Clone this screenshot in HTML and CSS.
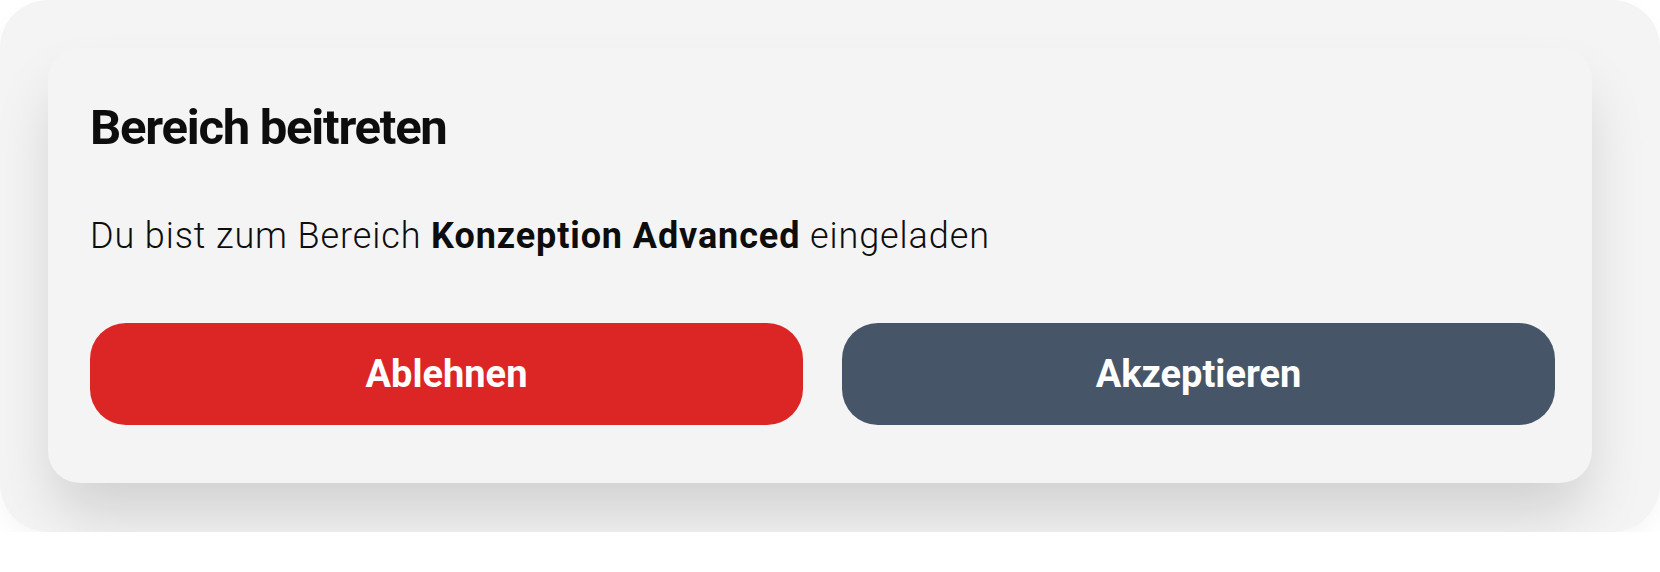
FILE: index.html
```html
<!DOCTYPE html>
<html>
<head>
    <title>Bereich beitreten</title>
    <meta charset="UTF-8">
    <meta name="viewport" content="width=device-width, initial-scale=1.0">
    <link rel="stylesheet" href="styles.css">
</head>
<body>
    <div class="backdrop">
        <section class="invite-card">
            <h2 class="invite-title">Bereich beitreten</h2>
            <p class="invite-text">Du bist zum Bereich <strong>Konzeption Advanced</strong> eingeladen</p>
            <div class="invite-actions">
                <button class="button button-decline">Ablehnen</button>
                <button class="button button-accept">Akzeptieren</button>
            </div>
        </section>
    </div>
</body>
</html>
```

FILE: styles.css
```css
/* Invite dialog */
:root {
    --surface: #f4f4f4;
    --danger: #dc2626;
    --slate: #475569;
    --text-dark: #0d0d0d;
}

* { margin: 0; padding: 0; box-sizing: border-box; }

body {
    font-family: Roboto, "Noto Sans", sans-serif;
    background: #ffffff;
    color: var(--text-dark);
}

.backdrop {
    width: 1660px;
    height: 532px;
    background: var(--surface);
    border-radius: 48px;
    padding: 48px 68px 0 48px;
    overflow: hidden;
    box-shadow: 0 10px 22px rgba(0,0,0,0.035);
}

.invite-card {
    background: var(--surface);
    border-radius: 32px;
    padding: 50px 37px 58px 42px;
    box-shadow: 0 36px 60px -6px rgba(0,0,0,0.15);
}

.invite-title {
    font-size: 49px;
    line-height: 60px;
    font-weight: 700;
    letter-spacing: -1.25px;
}

.invite-text {
    margin-top: 54px;
    font-size: 36px;
    line-height: 48px;
    font-weight: 300;
    letter-spacing: 0.9px;
}

.invite-text strong { font-weight: 700; }

.invite-actions {
    display: grid;
    grid-template-columns: 1fr 1fr;
    gap: 39px;
    margin-top: 63px;
}

.button {
    height: 102px;
    border: none;
    border-radius: 36px;
    color: #ffffff;
    font-family: inherit;
    font-size: 38px;
    font-weight: 700;
    cursor: pointer;
}

.button-decline { background: var(--danger); }
.button-accept { background: var(--slate); }

.button:hover { opacity: 0.9; }
```
